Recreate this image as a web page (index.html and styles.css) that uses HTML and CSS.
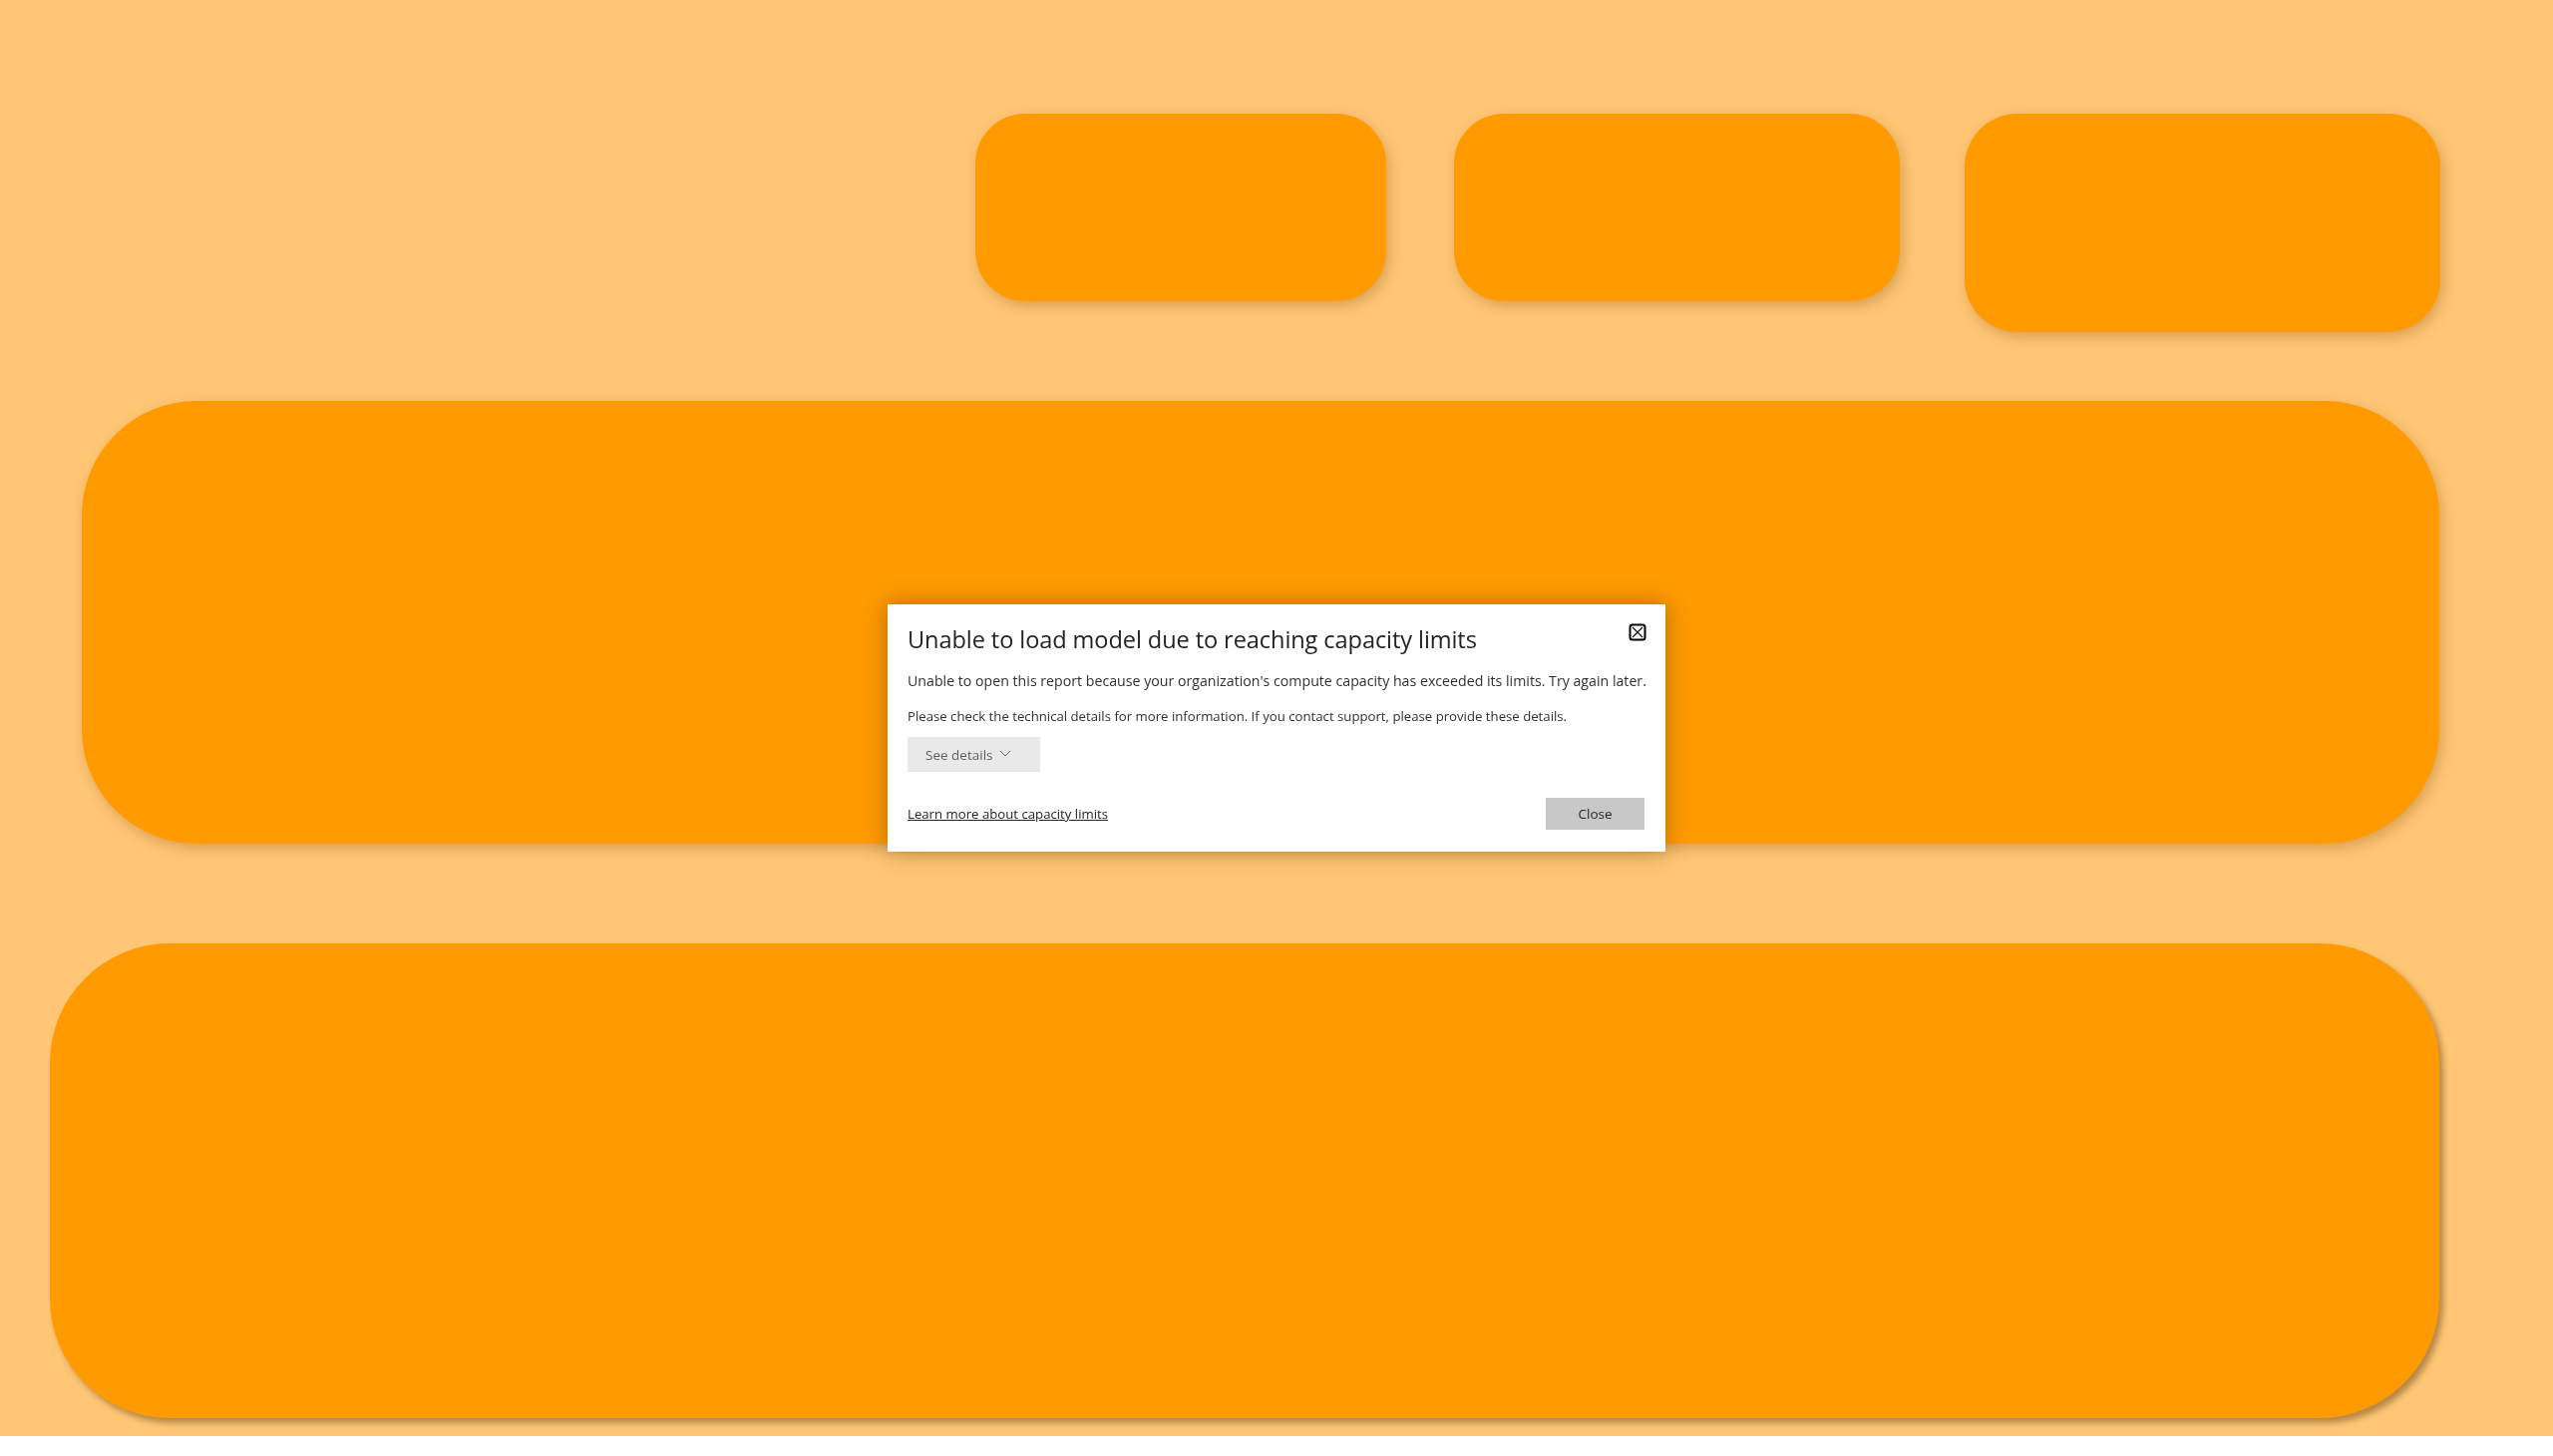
FILE: index.html
```html
<!DOCTYPE html>
<html lang="en">
<head>
<meta charset="utf-8">
<title>Report</title>
<link rel="stylesheet" href="styles.css">
</head>
<body>
<div class="page">
  <div class="top-row">
    <div class="card card-a"></div>
    <div class="card card-b"></div>
    <div class="card card-c"></div>
  </div>
  <div class="card big big-1"></div>
  <div class="card big big-2"></div>
</div>

<div class="overlay">
  <div class="dialog" role="dialog">
    <div class="dialog-head">
      <h1 class="dialog-title">Unable to load model due to reaching capacity limits</h1>
      <button class="icon-close" aria-label="Close">
        <svg width="18" height="18" viewBox="0 0 18 18">
          <rect x="1.5" y="1.5" width="15" height="15" rx="2.5" fill="none" stroke="#000" stroke-width="2"/>
          <path d="M4 4 L14 14 M14 4 L4 14" stroke="#000" stroke-width="1.1" fill="none"/>
        </svg>
      </button>
    </div>
    <p class="msg msg-main">Unable to open this report because your organization's compute capacity has exceeded its limits. Try again later.</p>
    <p class="msg msg-sub">Please check the technical details for more information. If you contact support, please provide these details.</p>
    <button class="details-btn">See details
      <svg class="chev" width="12" height="7" viewBox="0 0 12 7"><path d="M1 1 L6 6 L11 1" fill="none" stroke="#605e5c" stroke-width="1"/></svg>
    </button>
    <div class="dialog-foot">
      <a class="learn" href="#">Learn more about capacity limits</a>
      <button class="close-btn">Close</button>
    </div>
  </div>
</div>
</body>
</html>
```

FILE: styles.css
```css
html, body {
  margin: 0;
  padding: 0;
  background: #ffffff;
}

.page {
  height: 1440px;
  background: #ffc775;
  overflow: hidden;
}

.top-row {
  display: flex;
  align-items: flex-start;
  padding: 114px 0 0 978px;
  gap: 68px;
}

.card {
  background: #ff9b00;
  box-shadow: 3px 5px 14px rgba(120, 60, 0, 0.28);
}

.card-a { width: 412px; height: 188px; border-radius: 50px; }
.card-b { width: 447px; height: 188px; border-radius: 50px; margin-right: -3px; }
.card-c { width: 477px; height: 219px; border-radius: 53px; }

.big-1 {
  margin: 69px 0 0 82px;
  width: 2364px;
  height: 444px;
  border-radius: 115px;
}

.big-2 {
  margin: 100px 0 0 50px;
  width: 2396px;
  height: 476px;
  border-radius: 120px;
  box-shadow: 4px 5px 6px rgba(70, 40, 0, 0.4);
}

.overlay {
  position: fixed;
  inset: 0;
  display: flex;
  align-items: center;
  justify-content: center;
}

.dialog {
  width: 780px;
  height: 248px;
  box-sizing: border-box;
  background: #ffffff;
  padding: 0 21px 0 20px;
  box-shadow: 0 0 22px rgba(90, 50, 0, 0.45);
  font-family: "Open Sans", "Noto Sans", sans-serif;
  color: #252423;
}

.dialog-head {
  display: flex;
  justify-content: space-between;
  align-items: flex-start;
  padding-top: 20px;
}

.dialog-title {
  margin: 0;
  font-size: 23.6px;
  line-height: 30px;
  font-weight: 400;
  letter-spacing: -0.1px;
  white-space: nowrap;
}

.icon-close {
  border: 0;
  background: none;
  padding: 0;
  margin: -1px -2px 0 0;
  width: 18px;
  height: 18px;
  display: block;
}

.icon-close svg { display: block; }

.msg {
  margin: 0;
  color: #323130;
  white-space: nowrap;
}

.msg-main {
  margin-top: 17px;
  font-size: 14.18px;
  line-height: 20px;
}

.msg-sub {
  margin-top: 16px;
  font-size: 13.2px;
  line-height: 18px;
}

.details-btn {
  margin-top: 12px;
  width: 133px;
  height: 35px;
  border: 0;
  background: #e9e9e9;
  color: #605e5c;
  font-family: "Open Sans", "Noto Sans", sans-serif;
  font-size: 13.5px;
  display: flex;
  align-items: center;
  gap: 7px;
  padding: 0 0 0 18px;
}

.chev { display: block; margin-top: -2px; }

.dialog-foot {
  display: flex;
  justify-content: space-between;
  align-items: center;
  margin-top: 26px;
}

.learn {
  color: #252423;
  font-size: 13.2px;
  text-decoration: underline;
}

.close-btn {
  width: 99px;
  height: 32px;
  border: 0;
  background: #c8c8c8;
  color: #252423;
  font-family: "Open Sans", "Noto Sans", sans-serif;
  font-size: 13.5px;
  padding: 0;
}
```
